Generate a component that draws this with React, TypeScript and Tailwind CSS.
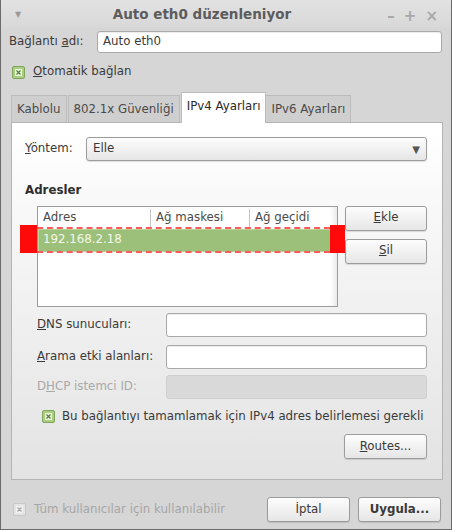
import React from "react";

// Little GTK-style check box (Mint-X green when enabled)
function Check({ disabled = false }: { disabled?: boolean }) {
  return (
    <span
      className={
        disabled
          ? "flex h-[13px] w-[13px] shrink-0 items-center justify-center rounded-[2px] border border-[#c8c8c8] bg-[#e4e4e4]"
          : "flex h-[13px] w-[13px] shrink-0 items-center justify-center rounded-[2px] border border-[#7fa658] bg-[#a9cd82]"
      }
    >
      <svg width="7" height="7" viewBox="0 0 7 7">
        <rect x="0" y="0" width="7" height="7" fill={disabled ? "#f2f2f2" : "#e9f5dc"} />
        <path d="M1.5 1.5 L5.5 5.5 M5.5 1.5 L1.5 5.5" stroke={disabled ? "#a8a8a8" : "#5d7f3d"} strokeWidth="1.3" />
      </svg>
    </span>
  );
}

function Btn({ children, className = "" }: { children: React.ReactNode; className?: string }) {
  return (
    <div
      className={
        "flex items-center justify-center rounded-[3px] border border-[#9c9c9c] bg-gradient-to-b from-[#fdfdfd] to-[#e6e6e6] shadow-[0_1px_1px_rgba(0,0,0,0.12)] " +
        className
      }
    >
      {children}
    </div>
  );
}

function Field({ disabled = false, className = "", children }: { disabled?: boolean; className?: string; children?: React.ReactNode }) {
  return (
    <div
      className={
        (disabled
          ? "border-[#cfcfcf] bg-[#d9d9d9] "
          : "border-[#a9a9a9] bg-white shadow-[inset_0_1px_1px_rgba(0,0,0,0.08)] ") +
        "flex items-center rounded-[3px] border px-[5px] " +
        className
      }
    >
      {children}
    </div>
  );
}

export default function App() {
  return (
    <div
      className="flex h-[530px] w-[452px] flex-col whitespace-nowrap border-x border-b border-[#6b6b6b] bg-[#d6d6d6] text-[11.8px] text-[#3a3a3a]"
      style={{ fontFamily: '"DejaVu Sans", sans-serif' }}
    >
      {/* title bar */}
      <div className="relative flex h-[28px] shrink-0 items-center bg-gradient-to-b from-[#e2e2e2] to-[#d8d8d8]">
        <span className="absolute left-[14px] top-[9px] text-[8px] text-[#9a9a9a]">▼</span>
        <div className="w-full pr-[48px] text-center text-[13.5px] font-bold text-[#5c5c5c]">Auto eth0 düzenleniyor</div>
        <div className="absolute right-[13px] top-[5px] flex gap-[9px] text-[15px] font-bold text-[#a8a8a8]">
          <span>–</span>
          <span>+</span>
          <span>×</span>
        </div>
      </div>

      {/* connection name */}
      <div className="mt-[3px] flex h-[22px] items-center pl-[8px] pr-[9px]">
        <span className="w-[88px]">
          Bağlantı <span className="underline">a</span>dı:
        </span>
        <Field className="h-[22px] flex-1">Auto eth0</Field>
      </div>

      <div className="mt-[12px] flex h-[14px] items-center gap-[8px] pl-[11px]">
        <Check />
        <span>
          <span className="underline">O</span>tomatik bağlan
        </span>
      </div>

      {/* tabs */}
      <div className="mt-[13px] flex h-[31px] items-end pl-[10px]">
        <div className="flex h-[28px] items-center border border-b-0 border-[#bcbcbc] bg-[#cfcfcf] px-[5px] text-[#4a4a4a]">Kablolu</div>
        <div className="ml-[1px] flex h-[28px] items-center border border-b-0 border-[#bcbcbc] bg-[#cfcfcf] px-[5px] text-[#4a4a4a]">802.1x Güvenliği</div>
        <div className="relative z-10 ml-[1px] flex h-[31px] items-center border border-b-0 border-[#bcbcbc] bg-white px-[5px] pb-[3px] text-[#2a2a2a]">
          IPv4 Ayarları
        </div>
        <div className="flex h-[28px] items-center border border-b-0 border-l-0 border-[#bcbcbc] bg-[#cfcfcf] px-[5px] text-[#4a4a4a]">IPv6 Ayarları</div>
      </div>

      {/* IPv4 page */}
      <div className="mx-[8px] ml-[10px] -mt-[1px] flex h-[358px] flex-col border border-[#b4b4b4] bg-gradient-to-b from-white to-[#e3e3e3] pl-[13px] pr-[15px]">
        <div className="mt-[14px] flex h-[24px] items-center">
          <span className="w-[61px]">
            <span className="underline">Y</span>öntem:
          </span>
          <Btn className="h-[24px] flex-1 !justify-between px-[6px]">
            <span>Elle</span>
            <span className="text-[10px] text-[#555]">▼</span>
          </Btn>
        </div>

        <div className="mt-[21px] font-bold text-[#2e2e2e]">Adresler</div>

        <div className="mt-[6px] flex pl-[12px]">
          <div className="relative">
            <div className="h-[101px] w-[301px] border border-[#9c9c9c] bg-white shadow-[inset_-6px_0_6px_-4px_rgba(0,0,0,0.12)]">
              <div className="flex h-[22px] items-center text-[#4a4a4a]">
                <div className="w-[113px] border-r border-[#c4c4c4] pl-[5px]">Adres</div>
                <div className="w-[99px] border-r border-[#c4c4c4] pl-[5px]">Ağ maskesi</div>
                <div className="flex-1 pl-[5px]">Ağ geçidi</div>
              </div>
              <div className="flex h-[23px] items-center border border-[#b6d39a] bg-[#9cc07a] pl-[4px] text-[#f4f7ea]">
                192.168.2.18
              </div>
            </div>
            {/* red highlight marks drawn over the selected row */}
            <div className="absolute left-[-17px] top-[19px] h-[28px] w-[17px] bg-[#ff0a0a]" />
            <div className="absolute left-[293px] top-[19px] h-[28px] w-[15px] bg-[#ff0a0a]" />
            <div className="absolute left-0 top-[21px] w-[293px] border-t-2 border-dashed border-[#ff5a5a]" />
            <div className="absolute left-0 top-[45px] w-[293px] border-t-2 border-dashed border-[#ff5a5a]" />
          </div>
          <div className="ml-[7px] flex flex-1 flex-col gap-[8px]">
            <Btn className="h-[25px]">
              <span>
                <span className="underline">E</span>kle
              </span>
            </Btn>
            <Btn className="h-[25px]">
              <span>
                <span className="underline">S</span>il
              </span>
            </Btn>
          </div>
        </div>

        <div className="mt-[6px] flex flex-col gap-[8px] pl-[12px]">
          <div className="flex h-[24px] items-center">
            <span className="w-[129px]">
              <span className="underline">D</span>NS sunucuları:
            </span>
            <Field className="h-[24px] flex-1" />
          </div>
          <div className="flex h-[24px] items-center">
            <span className="w-[129px]">
              <span className="underline">A</span>rama etki alanları:
            </span>
            <Field className="h-[24px] flex-1" />
          </div>
          <div className="mt-[-2px] flex h-[24px] items-center text-[#a9a9a9]">
            <span className="w-[129px]">
              D<span className="underline">H</span>CP istemci ID:
            </span>
            <Field disabled className="h-[24px] flex-1" />
          </div>
        </div>

        <div className="mt-[9px] flex items-center gap-[7px] pl-[17px]">
          <Check />
          <span>Bu bağlantıyı tamamlamak için IPv4 adres belirlemesi gerekli</span>
        </div>

        <div className="mt-[9px] flex justify-end">
          <Btn className="h-[25px] w-[83px]">
            <span>
              <span className="underline">R</span>outes...
            </span>
          </Btn>
        </div>
      </div>

      {/* dialog buttons */}
      <div className="mt-[17px] flex h-[25px] items-center pl-[12px] pr-[10px]">
        <div className="flex items-center gap-[8px] text-[#a6a6a6]">
          <Check disabled />
          <span>Tüm kullanıcılar için kullanılabilir</span>
        </div>
        <div className="ml-auto flex gap-[8px]">
          <Btn className="h-[25px] w-[83px]">İptal</Btn>
          <Btn className="h-[25px] w-[83px] font-bold">Uygula...</Btn>
        </div>
      </div>
    </div>
  );
}
